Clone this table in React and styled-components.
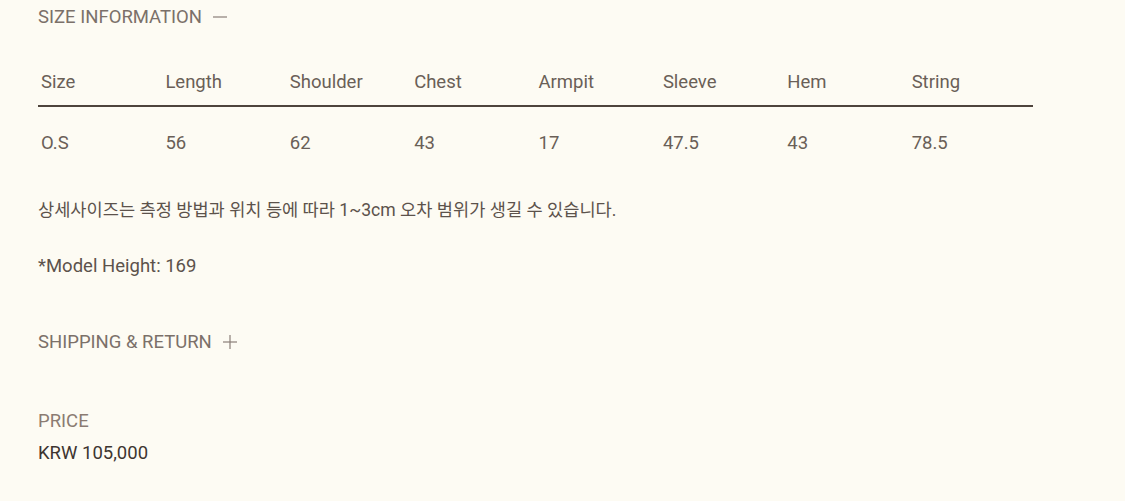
import React from "react";
import styled, { createGlobalStyle } from "styled-components";

const Global = createGlobalStyle`
  html, body { margin: 0; padding: 0; background: #fdfbf3; }
  body { font-family: Roboto, "Noto Sans CJK KR", sans-serif; }
`;

const Page = styled.div`
  padding: 7px 0 0 38px;
  width: 995px;
  color: #6a5f57;
`;

const SectionTitle = styled.div`
  display: flex;
  align-items: center;
  gap: 10px;
  margin-top: ${(p) => p.$top || 0}px;
  font-size: 18.5px;
  line-height: 20px;
  color: #7b7069;
`;

const Table = styled.table`
  width: 995px;
  border-collapse: collapse;
  margin-top: 42px;
  table-layout: fixed;
`;

const Th = styled.th`
  text-align: left;
  font-weight: 400;
  font-size: 18.5px;
  line-height: 22px;
  color: #6a5f57;
  padding: 1px 0 11px 3px;
  height: 24px;
  border-bottom: 2px solid #4e443c;
`;

const Td = styled.td`
  font-size: 18.5px;
  line-height: 22px;
  color: #6a5f57;
  padding: 25px 0 0 3px;
`;

const Note = styled.p`
  margin: ${(p) => p.$top}px 0 0;
  font-size: ${(p) => p.$size || 18.5}px;
  line-height: 20px;
  color: #5c524b;
`;

const Price = styled.div`
  margin-top: 59px;
`;

const PriceLabel = styled.div`
  font-size: 18.5px;
  line-height: 20px;
  color: #8b7b72;
`;

const PriceValue = styled.div`
  margin-top: 12px;
  font-size: 18.5px;
  line-height: 20px;
  color: #3d3530;
`;

const Icon = ({ plus }) => (
  <svg width="16" height="16" viewBox="0 0 16 16">
    <path d="M1 8h14" stroke="#8a7f78" strokeWidth="1.2" />
    {plus && <path d="M8 1v14" stroke="#8a7f78" strokeWidth="1.2" />}
  </svg>
);

const heads = ["Size", "Length", "Shoulder", "Chest", "Armpit", "Sleeve", "Hem", "String"];
const vals = ["O.S", "56", "62", "43", "17", "47.5", "43", "78.5"];

export default function App() {
  return (
    <>
      <Global />
      <Page>
        <SectionTitle>
          SIZE INFORMATION <Icon />
        </SectionTitle>
        <Table>
          <thead>
            <tr>{heads.map((h) => <Th key={h}>{h}</Th>)}</tr>
          </thead>
          <tbody>
            <tr>{vals.map((v, i) => <Td key={i}>{v}</Td>)}</tr>
          </tbody>
        </Table>
        <Note $top={46} $size={17.6}>상세사이즈는 측정 방법과 위치 등에 따라 1~3cm 오차 범위가 생길 수 있습니다.</Note>
        <Note $top={36}>*Model Height: 169</Note>
        <SectionTitle $top={56}>
          SHIPPING &amp; RETURN <Icon plus />
        </SectionTitle>
        <Price>
          <PriceLabel>PRICE</PriceLabel>
          <PriceValue>KRW 105,000</PriceValue>
        </Price>
      </Page>
    </>
  );
}
